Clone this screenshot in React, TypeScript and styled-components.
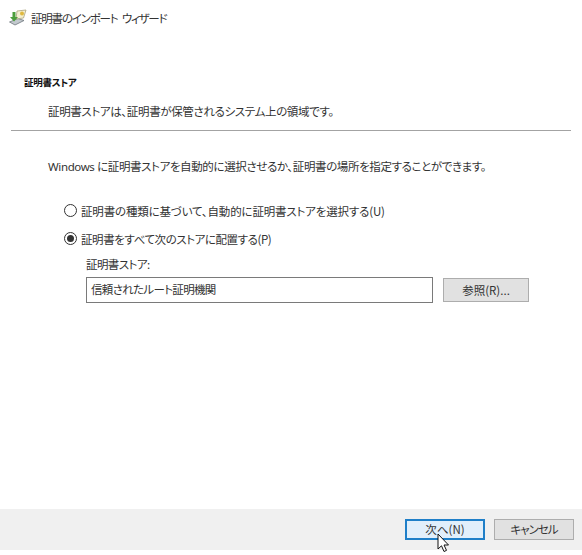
import React from 'react';
import styled, { createGlobalStyle } from 'styled-components';

const GlobalStyle = createGlobalStyle`
  html, body {
    margin: 0;
    padding: 0;
    background: #ffffff;
  }
  body {
    font-family: "Noto Sans CJK JP", "Noto Sans", sans-serif;
    font-feature-settings: "palt";
    color: #1a1a1a;
  }
`;

const Wizard = styled.div`
  width: 582px;
  height: 555px;
  display: flex;
  flex-direction: column;
  background: #ffffff;
  overflow: hidden;
`;

const TitleRow = styled.div`
  height: 36px;
  padding: 0 0 1px 9px;
  box-sizing: border-box;
  display: flex;
  align-items: center;
  gap: 4px;
  font-size: 11.5px;
  letter-spacing: -1.2px;
  word-spacing: 3px;
  color: #333333;
`;

const Header = styled.div`
  margin: 0 11px;
  height: 94px;
  border-bottom: 1px solid #a3a3a3;
  box-sizing: content-box;
`;

const SectionTitle = styled.div`
  padding: 39px 0 0 13px;
  height: 14px;
  font-size: 9.5px;
  line-height: 14px;
  font-weight: 700;
  letter-spacing: -0.3px;
  color: #111111;
`;

const SectionDesc = styled.div`
  padding: 13px 0 0 37px;
  font-size: 11.5px;
  line-height: 18px;
  letter-spacing: -0.35px;
  color: #333333;
`;

const Body = styled.div`
  flex: 1;
  padding: 27px 0 0 48px;
  display: flex;
  flex-direction: column;
`;

const Lead = styled.div`
  font-family: "Noto Sans", "Noto Sans CJK JP", sans-serif;
  font-size: 11.5px;
  line-height: 18px;
  letter-spacing: -0.38px;
  color: #333333;
`;

const OptionGroup = styled.div`
  margin: 25px 0 0 16px;
  display: flex;
  flex-direction: column;
  gap: 9px;
`;

const Option = styled.div<{ $spacing: number }>`
  display: flex;
  align-items: center;
  gap: 4px;
  height: 19px;
  font-size: 11.5px;
  letter-spacing: ${p => p.$spacing}px;
  color: #333333;
`;

const Radio = styled.span<{ $checked?: boolean }>`
  width: 13px;
  height: 13px;
  box-sizing: border-box;
  border: 1px solid #333333;
  border-radius: 50%;
  background: #ffffff;
  display: flex;
  align-items: center;
  justify-content: center;

  &::after {
    content: '';
    display: ${p => (p.$checked ? 'block' : 'none')};
    width: 7px;
    height: 7px;
    border-radius: 50%;
    background: #333333;
  }
`;

const StoreBlock = styled.div`
  margin: -2px 0 0 22px;
`;

const StoreLabel = styled.div`
  font-size: 11.5px;
  line-height: 18px;
  letter-spacing: -0.57px;
  color: #333333;
`;

const StoreRow = styled.div`
  margin-top: 4px;
  display: flex;
  align-items: flex-start;
  gap: 10px;
`;

const StoreField = styled.div`
  width: 347px;
  height: 26px;
  box-sizing: border-box;
  border: 1px solid #7a7a7a;
  padding-left: 4px;
  font-size: 11.5px;
  line-height: 22px;
  letter-spacing: -0.67px;
  color: #333333;
`;

const Button = styled.button<{ $primary?: boolean }>`
  width: 80px;
  height: 21px;
  padding: 0;
  box-sizing: border-box;
  font-family: "Noto Sans CJK JP", "Noto Sans", sans-serif;
  font-feature-settings: "palt";
  font-size: 11.5px;
  line-height: 17px;
  color: #333333;
  background: ${p => (p.$primary ? '#e1effb' : '#e1e1e1')};
  border: ${p => (p.$primary ? '2px solid #1f7fc8' : '1px solid #adadad')};
`;

const BrowseButton = styled(Button)`
  width: 86px;
  height: 24px;
  margin-top: 1px;
`;

const CancelButton = styled(Button)`
  letter-spacing: -1px;
`;

const Footer = styled.div`
  height: 41px;
  margin-bottom: 5px;
  padding: 10px 8px 0 0;
  box-sizing: border-box;
  background: #f0f0f0;
  display: flex;
  justify-content: flex-end;
  align-items: flex-start;
  gap: 9px;
  position: relative;
`;

const CursorIcon = styled.svg`
  position: absolute;
  left: 437px;
  top: 24px;
`;

const CertIcon = () => (
  <svg width="18" height="17" viewBox="0 0 18 17">
    <path d="M0.5 13 L9 9.5 L15 11.5 L6 16 Z" fill="#c3c9ce" stroke="#6f777e" strokeWidth="0.8" />
    <path d="M8 2 L17 1 L14.5 9 L7 10 Z" fill="#f5f0d0" stroke="#a9a27a" strokeWidth="0.8" />
    <circle cx="13" cy="4.5" r="2" fill="#e0b93f" />
    <path d="M3.5 3 V8 H1 L5 12.5 L9 8 H6.5 V3 Z" fill="#4d9e3c" />
  </svg>
);

const App: React.FC = () => {
  return (
    <Wizard>
      <GlobalStyle />
      <TitleRow>
        <CertIcon />
        <span>証明書のインポート ウィザード</span>
      </TitleRow>
      <Header>
        <SectionTitle>証明書ストア</SectionTitle>
        <SectionDesc>証明書ストアは、証明書が保管されるシステム上の領域です。</SectionDesc>
      </Header>
      <Body>
        <Lead>Windows に証明書ストアを自動的に選択させるか、証明書の場所を指定することができます。</Lead>
        <OptionGroup>
          <Option $spacing={-0.17}>
            <Radio />
            <span>証明書の種類に基づいて、自動的に証明書ストアを選択する(U)</span>
          </Option>
          <Option $spacing={-0.43}>
            <Radio $checked />
            <span>証明書をすべて次のストアに配置する(P)</span>
          </Option>
          <StoreBlock>
            <StoreLabel>証明書ストア:</StoreLabel>
            <StoreRow>
              <StoreField>信頼されたルート証明機関</StoreField>
              <BrowseButton>参照(R)...</BrowseButton>
            </StoreRow>
          </StoreBlock>
        </OptionGroup>
      </Body>
      <Footer>
        <Button $primary>次へ(N)</Button>
        <CancelButton>キャンセル</CancelButton>
        <CursorIcon width="14" height="21" viewBox="0 0 14 21">
          <path d="M1 1 V16 L4.5 12.8 L7 18.5 L9.5 17.4 L7 12 H11.5 Z" fill="#ffffff" stroke="#111111" strokeWidth="1" />
        </CursorIcon>
      </Footer>
    </Wizard>
  );
};

export default App;
